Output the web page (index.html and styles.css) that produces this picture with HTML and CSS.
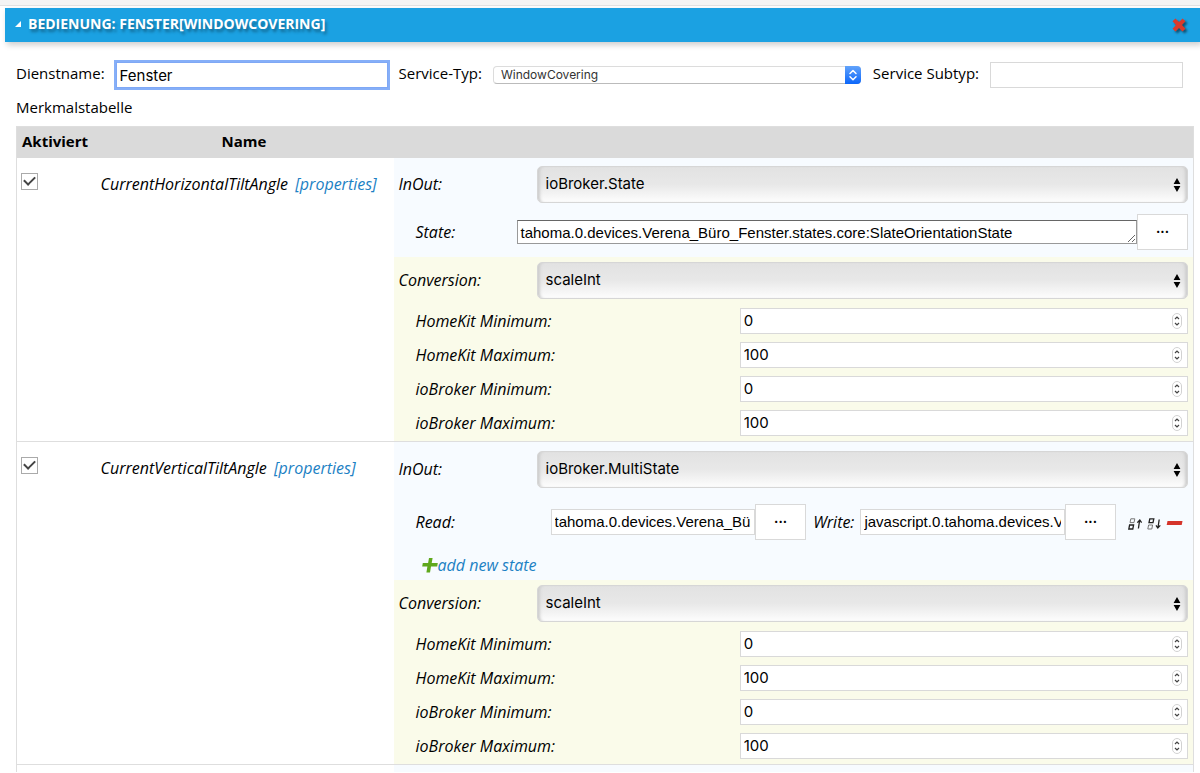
FILE: index.html
```
<!DOCTYPE html>
<html lang="de">
<head>
<meta charset="utf-8">
<title>Bedienung: Fenster</title>
<link rel="stylesheet" href="styles.css">
</head>
<body>
<svg class="defs" aria-hidden="true">
  <symbol id="updown" viewBox="0 0 8 14"><path d="M4 0L7.4 6H.6zM4 14L.6 8h6.800z"/></symbol>
  <symbol id="spin" viewBox="0 0 10 16"><rect x=".5" y=".5" width="9" height="15" rx="4.500" fill="#fff" stroke="#d2d2d2"/><path d="M3 6l2-2 2 2M3 10l2 2 2-2" fill="none" stroke="#444" stroke-width="1.200"/></symbol>
</svg>
<div class="strip"></div>
<main class="panel">
  <header class="bar">
    <h1 class="bar-title"><svg class="tri" viewBox="0 0 6 6"><path d="M6 0v6H0z" fill="#fff"/></svg>BEDIENUNG: FENSTER[WINDOWCOVERING]</h1>
    <button class="icon-btn close" type="button" aria-label="Löschen"><svg viewBox="0 0 14 14" width="14" height="14"><path d="M3.500 .5L7 3.900 10.500 .5 13.500 3.200 10 7l3.500 3.800-3 2.700L7 10.100 3.500 13.500.5 10.800 4 7 .5 3.200z" fill="#d93a2b"/></svg></button>
  </header>
  <form class="content">
    <div class="service">
      <label for="name">Dienstname:</label>
      <input class="field name-field" id="name" type="text" value="Fenster" autofocus>
      <label for="type">Service-Typ:</label>
      <span class="select-wrap type-wrap">
        <select class="type-select" id="type"><option>WindowCovering</option></select>
        <svg class="type-arrows" viewBox="0 0 16 18"><defs><linearGradient id="blue" x2="0" y2="1"><stop stop-color="#62a3fb"/><stop offset="1" stop-color="#0b66fa"/></linearGradient></defs><path d="M0 0h12a4 4 0 0 1 4 4v10a4 4 0 0 1-4 4H0z" fill="url(#blue)"/><path d="M5 7.500l3-3 3 3M5 10.800l3 3 3-3" fill="none" stroke="#fff" stroke-width="1.500" stroke-linecap="round" stroke-linejoin="round"/></svg>
      </span>
      <label for="subtype">Service Subtyp:</label>
      <input class="field subtype" id="subtype" type="text">
    </div>
    <p class="caption" id="cap">Merkmalstabelle</p>
    <table class="features" aria-labelledby="cap">
      <colgroup><col class="col-active"><col class="col-name"><col></colgroup>
      <thead><tr><th class="left">Aktiviert</th><th>Name</th><th></th></tr></thead>
      <tbody>
        <tr>
          <td><input class="check" type="checkbox" checked aria-label="CurrentHorizontalTiltAngle"></td>
          <td class="name">CurrentHorizontalTiltAngle <a href="#p1">[properties]</a></td>
          <td>
            <div class="inout">
              <div class="line"><label for="io1">InOut:</label>
                <span class="select-wrap"><select class="select" id="io1"><option>ioBroker.State</option></select><svg class="arrows"><use href="#updown"/></svg></span></div>
              <div class="line state-line"><label class="sub" for="st1">State:</label>
                <span class="picker"><textarea class="area" id="st1" rows="1">tahoma.0.devices.Verena_Büro_Fenster.states.core:SlateOrientationState</textarea><button class="more" type="button">...</button></span></div>
            </div>
            <div class="conversion">
              <div class="line"><label for="cv1">Conversion:</label>
                <span class="select-wrap"><select class="select" id="cv1"><option>scaleInt</option></select><svg class="arrows"><use href="#updown"/></svg></span></div>
              <div class="numbers">
                <label for="a1">HomeKit Minimum:</label><span class="num-wrap"><input class="field" id="a1" type="number" value="0"><svg class="spin"><use href="#spin"/></svg></span>
                <label for="a2">HomeKit Maximum:</label><span class="num-wrap"><input class="field" id="a2" type="number" value="100"><svg class="spin"><use href="#spin"/></svg></span>
                <label for="a3">ioBroker Minimum:</label><span class="num-wrap"><input class="field" id="a3" type="number" value="0"><svg class="spin"><use href="#spin"/></svg></span>
                <label for="a4">ioBroker Maximum:</label><span class="num-wrap"><input class="field" id="a4" type="number" value="100"><svg class="spin"><use href="#spin"/></svg></span>
              </div>
            </div>
          </td>
        </tr>
        <tr>
          <td><input class="check" type="checkbox" checked aria-label="CurrentVerticalTiltAngle"></td>
          <td class="name">CurrentVerticalTiltAngle <a href="#p2">[properties]</a></td>
          <td>
            <div class="inout multi">
              <div class="line"><label for="io2">InOut:</label>
                <span class="select-wrap"><select class="select" id="io2"><option>ioBroker.MultiState</option></select><svg class="arrows"><use href="#updown"/></svg></span></div>
              <div class="line read-line"><label class="sub" for="rd">Read:</label>
                <span class="picker"><input class="field" id="rd" type="text" value="tahoma.0.devices.Verena_Büro_Fenster"><button class="more" type="button">...</button></span>
                <label class="write" for="wr">Write:</label>
                <span class="picker"><input class="field" id="wr" type="text" value="javascript.0.tahoma.devices.Verena"><button class="more" type="button">...</button></span>
                <span class="tools">
                  <button class="icon-btn" type="button" aria-label="Nach oben"><svg width="15" height="12" viewBox="0 0 15 12" fill="none" stroke="#222"><path d="M2.800.8h4L6 4.600H2z" stroke="#777"/><path d="M1.600 7h4L4.800 11h-4z" stroke-width="1.300"/><path d="M10.400 10.500l1.200-8M9.300 4.600L11.800 2l1.800 2.600" stroke-width="1.300"/></svg></button>
                  <button class="icon-btn" type="button" aria-label="Nach unten"><svg width="15" height="12" viewBox="0 0 15 12" fill="none" stroke="#222"><path d="M2.800.8h4L6 4.600H2z" stroke-width="1.300"/><path d="M1.600 7h4L4.800 11h-4z" stroke="#777"/><path d="M12.200 1.500l-1.200 8M9 7.400l1.800 2.600 2.500-2.600" stroke-width="1.300"/></svg></button>
                  <button class="icon-btn" type="button" aria-label="Entfernen"><svg width="17" height="12" viewBox="0 0 17 12"><path d="M1.500 3h15l-.8 4H.7z" fill="#d5342b"/></svg></button>
                </span></div>
              <a class="add" href="#add"><svg width="16" height="16" viewBox="0 0 16 16"><path d="M7 1h3.600l-.9 5H15.800l-.6 3.600H9L8 15.500H4.400l1-5.900H.2L.8 6h5.300z" fill="#5fa81c"/></svg>add new state</a>
            </div>
            <div class="conversion">
              <div class="line"><label for="cv2">Conversion:</label>
                <span class="select-wrap"><select class="select" id="cv2"><option>scaleInt</option></select><svg class="arrows"><use href="#updown"/></svg></span></div>
              <div class="numbers">
                <label for="b1">HomeKit Minimum:</label><span class="num-wrap"><input class="field" id="b1" type="number" value="0"><svg class="spin"><use href="#spin"/></svg></span>
                <label for="b2">HomeKit Maximum:</label><span class="num-wrap"><input class="field" id="b2" type="number" value="100"><svg class="spin"><use href="#spin"/></svg></span>
                <label for="b3">ioBroker Minimum:</label><span class="num-wrap"><input class="field" id="b3" type="number" value="0"><svg class="spin"><use href="#spin"/></svg></span>
                <label for="b4">ioBroker Maximum:</label><span class="num-wrap"><input class="field" id="b4" type="number" value="100"><svg class="spin"><use href="#spin"/></svg></span>
              </div>
            </div>
          </td>
        </tr>
        <tr class="next"><td></td><td></td><td><div class="inout"></div></td></tr>
      </tbody>
    </table>
  </form>
</main>
</body>
</html>
```
FILE: styles.css
```
* { box-sizing: border-box; }
body {
  margin: 0;
  background: #fff;
  color: #000;
  font: 15px/20px "Open Sans", sans-serif;
}
input, select, textarea, button { font: 15px/20px Inter, sans-serif; color: #000; margin: 0; }
.defs { display: none; }
a { color: #1c81c4; text-decoration: none; }

.strip { height: 6px; background: #f4f4f4; border-bottom: 1px solid #e2e2e2; }
.panel { padding: 2px 0 0 5px; }
.bar {
  display: flex;
  align-items: center;
  justify-content: space-between;
  height: 34px;
  padding: 0 14px 0 10px;
  background: #1ba1e2;
  box-shadow: 2px 3px 6px rgba(0, 0, 0, .2);
}
.bar-title {
  display: flex;
  align-items: center;
  gap: 7px;
  margin: 0 0 2px;
  color: #fff;
  font-size: 14px;
  font-weight: 700;
  text-shadow: 2px 3px 3px rgba(0, 0, 0, .35);
}
.tri { width: 6px; height: 6px; }
.icon-btn { display: block; padding: 0; border: 0; background: none; }
.icon-btn svg { display: block; }
.close svg { overflow: visible; filter: drop-shadow(2px 2px 1px rgba(0, 0, 0, .5)); }

.content { padding: 20px 6px 0 11px; }
.service { display: flex; align-items: center; padding-right: 11px; height: 26px; }
.service label { margin-right: 11px; margin-bottom: 4px; white-space: nowrap; }
.field {
  width: 100%;
  min-width: 0;
  height: 26px;
  padding: 1px 3px;
  border: 1px solid #d9d9d9;
  border-radius: 0;
  background: #fff;
  outline: 0;
}
.name-field {
  flex: 264;
  margin-right: 11px;
  border-color: #7fa8f5;
  box-shadow: 0 0 0 2px #86aff8;
}
.subtype { flex: 185; }
.select-wrap { position: relative; display: block; flex: 1; min-width: 0; }
.service .type-wrap { flex: 368; margin-right: 12px; }
.type-select {
  appearance: none;
  display: block;
  width: 100%;
  height: 18px;
  padding: 0 7px;
  border: 1px solid #dcdcdc;
  border-bottom-color: #bbb;
  border-radius: 4px;
  background: #fff;
  color: #333;
  font-size: 12px;
  line-height: 16px;
}
.type-arrows { position: absolute; right: 0; top: 0; width: 16px; height: 18px; pointer-events: none; }
.caption { margin: 9px 0; }

.features { width: 100%; table-layout: fixed; border-collapse: collapse; border: 1px solid #dedede; border-bottom: 0; }
.col-active { width: 78px; }
.col-name { width: 299px; }
.features th { height: 31px; padding: 0 5px 2px; background: #dadada; font-weight: 700; }
.features .left { text-align: left; }
.features td { padding: 0; vertical-align: top; border-bottom: 1px solid #dedede; }
.features .name { padding: 16px 6px 0; font-size: 16px; font-style: italic; white-space: nowrap; }
.name a { margin-left: 3px; }
.check {
  appearance: none;
  display: grid;
  place-items: center;
  width: 17px;
  height: 17px;
  margin: 15px 0 0 4px;
  border: 1px solid #aaa;
  background: #fff;
}
.check:checked::before {
  content: "";
  width: 9px;
  height: 5px;
  border-left: 2px solid #444;
  border-bottom: 2px solid #444;
  transform: rotate(-45deg);
  margin-bottom: 3px;
}
.inout { min-height: 7px; padding: 8px 5px 7px; background: #f7fbff; }
.conversion { padding: 5px; background: #fafbea; }
.line { display: flex; align-items: center; font-size: 16px; font-style: italic; }
.line > label { flex: 0 0 138px; }
.line > .sub { padding-left: 17px; }
.select {
  appearance: none;
  display: block;
  width: 100%;
  height: 37px;
  padding: 0 8px;
  border: 1px solid #d6d6d6;
  border-radius: 5px;
  background: linear-gradient(#e2e2e2, #e8e8e8 50%, #fdfdfd);
  box-shadow: inset 4px 0 3px -2px #ccc, inset -4px 0 3px -2px #ccc;
}
.arrows { position: absolute; right: 7px; top: 12px; width: 8px; height: 14px; pointer-events: none; }
.state-line { margin-top: 11px; }
.line.state-line > label { flex-basis: 118px; }
.picker { display: flex; flex: 1; align-items: center; min-width: 0; }
.picker .field, .picker .area { font-family: "Liberation Sans", sans-serif; }
.area {
  flex: 1;
  min-width: 0;
  height: 24px;
  padding: 2px 3px;
  border: 1px solid #999;
  border-top-color: #666;
  outline: 0;
  background: #fff;
  overflow: hidden;
  white-space: nowrap;
}
.more {
  flex: none;
  width: 51px;
  height: 36px;
  padding: 0 0 7px;
  border: 1px solid #d9d9d9;
  background: #fff;
  font-size: 13px;
  font-weight: 700;
}
.numbers {
  display: grid;
  grid-template-columns: 341fr 448fr;
  row-gap: 8px;
  align-items: center;
  margin-top: 9px;
  font-size: 16px;
  font-style: italic;
}
.numbers label { padding-left: 17px; }
.num-wrap { position: relative; }
.num-wrap .field { display: block; appearance: textfield; }
.num-wrap .field::-webkit-inner-spin-button { appearance: none; }
.spin { position: absolute; right: 6px; top: 5px; width: 10px; height: 16px; pointer-events: none; }
.multi { padding-top: 9px; padding-bottom: 5px; }
.read-line { margin-top: 16px; }
.line.read-line > .sub { flex-basis: 152px; }
.line.read-line > .write { flex: none; padding: 0 6px 0 7px; }
.tools { display: flex; gap: 4px; padding: 4px 5px 0 12px; }
.add { display: flex; width: max-content; align-items: center; margin: 15px 0 0 23px; font-size: 16px; font-style: italic; }
.next td { border-bottom: 0; }
.next .inout { padding: 0; }
```
